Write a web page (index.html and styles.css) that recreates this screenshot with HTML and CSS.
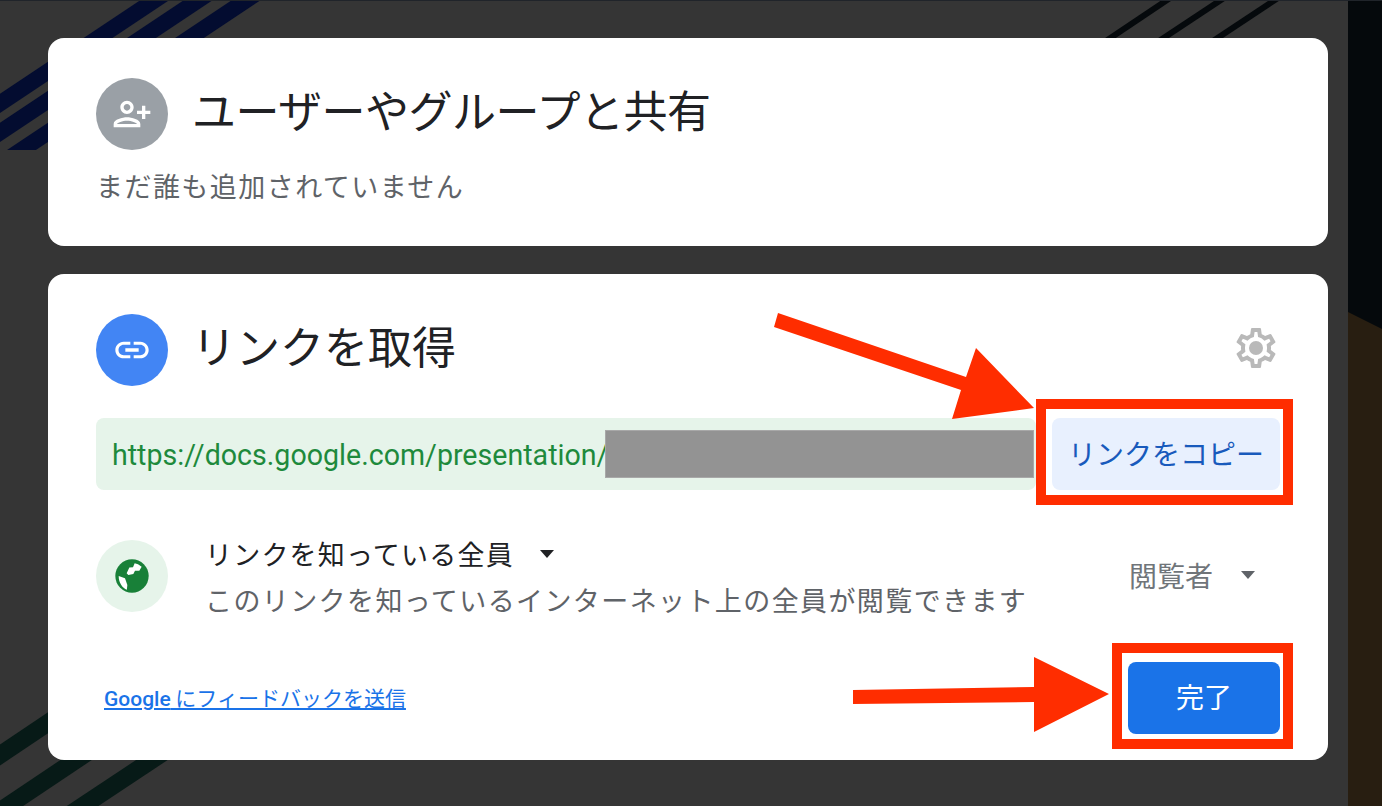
FILE: index.html
```html
<!DOCTYPE html>
<html lang="ja">
<head>
<meta charset="utf-8">
<title>共有</title>
<link rel="stylesheet" href="styles.css">
</head>
<body>
<svg class="backdrop" width="1382" height="806" viewBox="0 0 1382 806" aria-hidden="true">
  <defs><clipPath id="blue-clip"><rect x="0" y="0" width="400" height="150"/></clipPath></defs>
  <rect x="1348" y="0" width="34" height="806" fill="#05090c"/>
  <polygon points="1348,312 1382,329 1382,806 1348,806" fill="#281e11"/>
  <g clip-path="url(#blue-clip)" stroke="#030c30" stroke-width="16">
    <line x1="-10" y1="110" x2="170" y2="-10"/>
    <line x1="-10" y1="139" x2="215" y2="-11"/>
    <line x1="-10" y1="171" x2="260" y2="-9"/>
  </g>
  <g stroke="#05090c" stroke-width="6">
    <line x1="1100" y1="45" x2="1182" y2="-10"/>
    <line x1="1153" y1="45" x2="1236" y2="-10"/>
    <line x1="1207" y1="45" x2="1290" y2="-10"/>
  </g>
  <g stroke="#071a17" stroke-width="17.5">
    <line x1="-15" y1="765" x2="70" y2="708"/>
    <line x1="-15" y1="821" x2="100" y2="744"/>
    <line x1="60" y1="821" x2="185" y2="738"/>
  </g>
  <rect x="0" y="0" width="1382" height="1" fill="#20242a"/>
</svg>

<main class="page">
  <section class="card card-people">
    <div class="head">
      <span class="disc disc-grey">
        <svg class="icon" viewBox="0 0 24 24"><path transform="matrix(-1 0 0 1 24 0)" fill="#fff" d="M15 12c2.21 0 4-1.79 4-4s-1.79-4-4-4-4 1.79-4 4 1.79 4 4 4zm0-6c1.1 0 2 .9 2 2s-.9 2-2 2-2-.9-2-2 .9-2 2-2zm0 8c-2.67 0-8 1.34-8 4v2h16v-2c0-2.66-5.33-4-8-4zm-6 4c.22-.72 3.31-2 6-2 2.7 0 5.8 1.29 6 2H9zm-3-3v-3h3v-2H6V7H4v3H1v2h3v3z"/></svg>
      </span>
      <h2 class="title title-long">ユーザーやグループと共有</h2>
    </div>
    <p class="empty">まだ誰も追加されていません</p>
  </section>

  <section class="card card-link">
    <div class="head">
      <span class="disc disc-blue">
        <svg class="icon" viewBox="0 0 24 24"><path fill="#fff" d="M3.9 12c0-1.71 1.39-3.1 3.1-3.1h4V7H7c-2.76 0-5 2.24-5 5s2.24 5 5 5h4v-1.9H7c-1.71 0-3.1-1.39-3.1-3.1zM8 13h8v-2H8v2zm9-6h-4v1.9h4c1.71 0 3.1 1.39 3.1 3.1s-1.39 3.1-3.1 3.1h-4V17h4c2.76 0 5-2.24 5-5s-2.24-5-5-5z"/></svg>
      </span>
      <h2 class="title">リンクを取得</h2>
      <svg class="gear" viewBox="0 0 24 24"><path fill="#b9b9b9" d="M19.43 12.98c.04-.32.07-.64.07-.98 0-.34-.03-.66-.07-.98l2.11-1.65c.19-.15.24-.42.12-.64l-2-3.46c-.09-.16-.26-.25-.44-.25-.06 0-.12.01-.17.03l-2.49 1c-.52-.4-1.08-.73-1.69-.98l-.38-2.65C14.46 2.18 14.25 2 14 2h-4c-.25 0-.46.18-.49.42l-.38 2.65c-.61.25-1.17.59-1.69.98l-2.49-1c-.06-.02-.12-.03-.18-.03-.17 0-.34.09-.43.25l-2 3.46c-.13.22-.07.49.12.64l2.11 1.65c-.04.32-.07.65-.07.98 0 .33.03.66.07.98l-2.11 1.65c-.19.15-.24.42-.12.64l2 3.46c.09.16.26.25.44.25.06 0 .12-.01.17-.03l2.49-1c.52.4 1.08.73 1.69.98l.38 2.65c.03.24.24.42.49.42h4c.25 0 .46-.18.49-.42l.38-2.65c.61-.25 1.17-.59 1.69-.98l2.49 1c.06.02.12.03.18.03.17 0 .34-.09.43-.25l2-3.46c.12-.22.07-.49-.12-.64l-2.11-1.65zm-1.98-1.71c.04.31.05.52.05.73 0 .21-.02.43-.05.73l-.14 1.13.89.7 1.08.84-.7 1.21-1.27-.51-1.04-.42-.9.68c-.43.32-.84.56-1.25.73l-1.06.43-.16 1.13-.2 1.35h-1.4l-.19-1.35-.16-1.13-1.06-.43c-.43-.18-.83-.41-1.23-.71l-.91-.7-1.06.43-1.27.51-.7-1.21 1.08-.84.89-.7-.14-1.13c-.03-.31-.05-.54-.05-.74s.02-.43.05-.73l.14-1.13-.89-.7-1.08-.84.7-1.21 1.27.51 1.04.42.9-.68c.43-.32.84-.56 1.25-.73l1.06-.43.16-1.13.2-1.35h1.39l.19 1.35.16 1.13 1.06.43c.43.18.83.41 1.23.71l.91.7 1.06-.43 1.27-.51.7 1.21-1.07.85-.89.7.14 1.13z"/><circle cx="12" cy="12" r="3.5" fill="#b9b9b9"/></svg>
    </div>

    <div class="url-row">
      <div class="url-bar">
        <span class="url-text">https://docs.google.com/presentation/</span>
        <span class="redacted"></span>
      </div>
      <button class="copy" type="button">リンクをコピー</button>
    </div>

    <div class="access-row">
      <span class="disc disc-green">
        <svg class="icon" viewBox="0 0 24 24"><circle cx="12" cy="12" r="10" fill="#188038"/><path fill="#fff" d="M8.8 10.4 10.4 6.9 12.6 6.7 13.6 4.4 15.6 4.9 17.8 6.4 16.4 8.8 13.8 8.8 12.8 10.8 9.8 11.4z"/><path fill="#fff" d="M4 12 7.8 13.4 9.2 17.4 8.9 20.3C6.2 19.2 4 16 4 12z"/></svg>
      </span>
      <div class="access-text">
        <div class="access-scope">リンクを知っている全員<span class="caret caret-dark"></span></div>
        <div class="access-desc">このリンクを知っているインターネット上の全員が閲覧できます</div>
      </div>
      <div class="role">閲覧者<span class="caret caret-grey"></span></div>
    </div>

    <div class="foot">
      <a class="feedback" href="#"><span class="feedback-brand">Google</span> にフィードバックを送信</a>
      <button class="done" type="button">完了</button>
    </div>
  </section>
</main>

<svg class="marks" width="1382" height="806" viewBox="0 0 1382 806" aria-hidden="true">
  <polygon fill="#ff2d00" points="778,313 966,377 976,348 1034,408 952,419 961,390 774,327"/>
  <polygon fill="#ff2d00" points="853,690 1034,687 1034,657 1109,694 1034,732 1034,702 853,704"/>
  <rect class="mark-box" x="1041" y="404" width="247" height="96"/>
  <rect class="mark-box" x="1117" y="648" width="171" height="96"/>
</svg>
</body>
</html>
```
FILE: styles.css
```css
* { box-sizing: border-box; }

html, body {
  margin: 0;
  width: 1382px;
  height: 806px;
  overflow: hidden;
}

body {
  position: relative;
  background: #353535;
  font-family: "Noto Sans CJK JP", "Noto Sans", sans-serif;
  color: #202124;
}

.backdrop, .marks {
  position: absolute;
  left: 0;
  top: 0;
  display: block;
}

.mark-box {
  fill: none;
  stroke: #ff2d00;
  stroke-width: 10;
}

.page {
  position: relative;
  padding: 38px 54px 0 48px;
}

.card {
  background: #fff;
  border-radius: 16px;
  padding: 40px 48px 0;
}

.card-people { height: 208px; }

.card-link {
  height: 486px;
  margin-top: 28px;
}

.head {
  display: flex;
  align-items: center;
  height: 72px;
}

.disc {
  flex: none;
  width: 72px;
  height: 72px;
  border-radius: 50%;
  display: flex;
  align-items: center;
  justify-content: center;
}

.disc-grey { background: #9aa0a6; }
.disc-blue { background: #4285f4; }
.disc-green { background: #e6f4ea; }

.icon {
  width: 40px;
  height: 40px;
  display: block;
}

.title {
  margin: 0 0 10px 24px;
  font-size: 44px;
  line-height: 56px;
  font-weight: 400;
  color: #202124;
}

.title-long {
  letter-spacing: -0.5px;
}

.gear {
  width: 48px;
  height: 48px;
  margin: 0 0 4px auto;
  display: block;
}

.empty {
  margin: 16px 0 0;
  font-size: 27px;
  line-height: 40px;
  letter-spacing: 1.45px;
  color: #5f6368;
}

.url-row {
  display: flex;
  gap: 16px;
  height: 72px;
  margin-top: 32px;
}

.url-bar {
  width: 940px;
  background: #e6f4ea;
  border-radius: 8px;
  padding: 0 2px 0 16px;
  display: flex;
  align-items: center;
}

.url-text {
  flex: 1 1 0;
  min-width: 0;
  padding-top: 1px;
  font-family: Roboto, sans-serif;
  font-size: 28.6px;
  color: #1e8a3c;
  white-space: nowrap;
}

.redacted {
  flex: none;
  width: 429px;
  height: 48px;
  background: #939393;
  border: 1px solid #a8a8a8;
}

.copy, .done {
  border: 0;
  border-radius: 8px;
  font-family: inherit;
  font-size: 28px;
}

.copy {
  width: 228px;
  padding: 0 0 3px;
  background: #e8f0fe;
  color: #185abc;
}

.access-row {
  display: flex;
  align-items: center;
  height: 72px;
  margin-top: 50px;
}

.access-text {
  margin-left: 37px;
  flex: 1;
  padding-top: 2px;
}

.access-scope {
  font-size: 27px;
  line-height: 46px;
  letter-spacing: 1.2px;
  color: #202124;
  display: flex;
  align-items: center;
}

.access-desc {
  font-size: 27px;
  line-height: 46px;
  letter-spacing: 1.4px;
  color: #5f6368;
  white-space: nowrap;
}

.caret {
  width: 0;
  height: 0;
  border-left: 7.5px solid transparent;
  border-right: 7.5px solid transparent;
  display: inline-block;
}

.caret-dark {
  border-top: 8px solid #202124;
  margin-left: 26px;
}

.caret-grey {
  border-top: 8px solid #5f6368;
  margin-left: 28px;
}

.role {
  display: flex;
  align-items: center;
  font-size: 28px;
  color: #70757a;
  margin: 0 25px 2px 0;
}

.foot {
  display: flex;
  align-items: center;
  justify-content: space-between;
  height: 72px;
  margin-top: 50px;
}

.feedback {
  margin: 0 0 3px 8px;
  font-size: 21px;
  color: #1a73e8;
  text-decoration: underline;
}

.feedback-brand {
  font-family: Roboto, sans-serif;
  font-weight: 500;
  font-size: 21px;
}

.done {
  width: 152px;
  height: 72px;
  padding: 0 0 4px;
  background: #1a73e8;
  color: #fff;
}
```
